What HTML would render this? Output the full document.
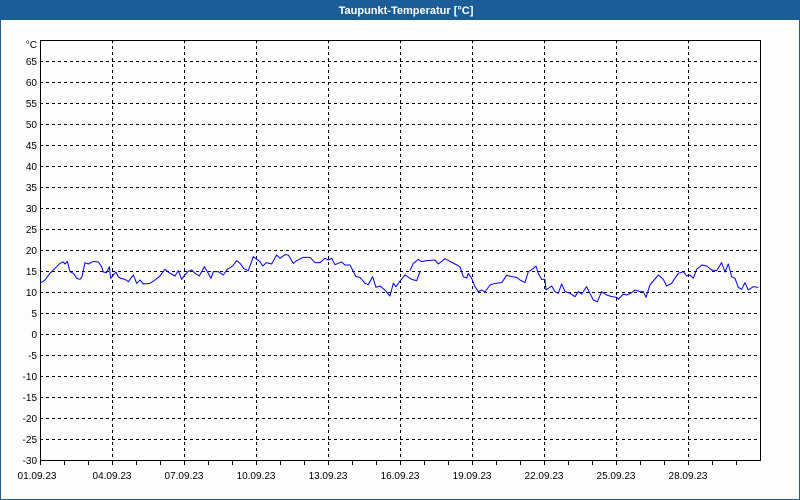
<!DOCTYPE html><html><head><meta charset="utf-8"><style>
html,body{margin:0;padding:0;width:800px;height:500px;overflow:hidden;background:#fcfdfc}
svg{display:block}
text{font-family:"Liberation Sans",sans-serif;font-size:10px;fill:#000}
</style></head><body>
<svg width="800" height="500" viewBox="0 0 800 500">
<rect x="0.5" y="0.5" width="799" height="499" fill="#fcfdfc" stroke="#1b5e97"/>
<rect x="0" y="0" width="800" height="20" fill="#1b5e97"/>
<text x="406" y="14" text-anchor="middle" style="font-weight:bold;font-size:11px;fill:#fff">Taupunkt-Temperatur [°C]</text>
<g stroke="#000" stroke-dasharray="3,3" stroke-width="1">
<path d="M40 61.5H760M40 82.5H760M40 103.5H760M40 124.5H760M40 145.5H760M40 166.5H760M40 187.5H760M40 208.5H760M40 229.5H760M40 250.5H760M40 271.5H760M40 292.5H760M40 313.5H760M40 334.5H760M40 355.5H760M40 376.5H760M40 397.5H760M40 418.5H760M40 439.5H760"/>
<path d="M112.5 40V460M184.5 40V460M256.5 40V460M328.5 40V460M400.5 40V460M472.5 40V460M544.5 40V460M616.5 40V460M688.5 40V460"/>
</g>
<rect x="40.5" y="40.5" width="720" height="420" fill="none" stroke="#000"/>
<g stroke="#000"><path d="M64.5 460v5M88.5 460v5M112.5 460v5M136.5 460v5M160.5 460v5M184.5 460v5M208.5 460v5M232.5 460v5M256.5 460v5M280.5 460v5M304.5 460v5M328.5 460v5M352.5 460v5M376.5 460v5M400.5 460v5M424.5 460v5M448.5 460v5M472.5 460v5M496.5 460v5M520.5 460v5M544.5 460v5M568.5 460v5M592.5 460v5M616.5 460v5M640.5 460v5M664.5 460v5M688.5 460v5M712.5 460v5M736.5 460v5M40.5 460v5"/></g>
<g text-anchor="end">
<text x="37" y="48">°C</text>
<text x="37" y="65">65</text><text x="37" y="86">60</text><text x="37" y="107">55</text><text x="37" y="128">50</text><text x="37" y="149">45</text><text x="37" y="170">40</text><text x="37" y="191">35</text><text x="37" y="212">30</text><text x="37" y="233">25</text><text x="37" y="254">20</text><text x="37" y="275">15</text><text x="37" y="296">10</text><text x="37" y="317">5</text><text x="37" y="338">0</text><text x="37" y="359">-5</text><text x="37" y="380">-10</text><text x="37" y="401">-15</text><text x="37" y="422">-20</text><text x="37" y="443">-25</text><text x="37" y="464">-30</text>
</g>
<g text-anchor="middle">
<text x="37" y="479">01.09.23</text><text x="112" y="479">04.09.23</text><text x="184" y="479">07.09.23</text><text x="256" y="479">10.09.23</text><text x="328" y="479">13.09.23</text><text x="400" y="479">16.09.23</text><text x="472" y="479">19.09.23</text><text x="544" y="479">22.09.23</text><text x="616" y="479">25.09.23</text><text x="688" y="479">28.09.23</text>
</g>
<g fill="none" stroke="#0000ee" stroke-width="1" stroke-linejoin="round">
<polyline vector-effect="non-scaling-stroke" transform="translate(30,240) scale(0.3333)" points="30,130 45,120 60,100 75,85 90,70 100,66 105,72 112,64 120,95 130,100 140,115 150,118 156,110 165,68 175,72 190,64 205,66 215,80 220,96 230,98 238,80 242,115 250,105 258,96 265,110 272,115 285,118 295,125 310,105 320,130 330,120 340,132 360,130 375,120 388,110 405,88 420,100 435,108 445,92 455,118 465,104 475,94 485,90 495,100 508,108 523,80 535,100 543,115 550,95 565,95 580,105 592,88 608,78 620,62 630,70 642,86 655,92 670,50 690,65 698,78 710,68 725,72 740,45 750,55 765,44 775,45 790,70 800,62 820,52 840,52 855,68 870,68 885,55 895,60 905,55 915,74 925,70 935,66 945,75 960,75 978,110 990,112 1005,130 1015,134 1028,110 1038,142 1050,138 1065,150 1080,168 1090,130 1098,140 1108,126 1125,105 1145,118 1160,122 1170,95"/>
<polyline vector-effect="non-scaling-stroke" transform="translate(410,240) scale(0.3333)" points="0,92 10,70 25,58 35,65 50,62 75,60 85,72 105,56 120,64 135,72 150,80 160,110 170,114 175,100 185,115 195,140 205,155 215,150 225,156 240,135 255,130 275,128 290,106 305,110 320,112 330,120 345,128 355,95 370,86 378,78 385,100 395,118 405,118 408,150 425,138 435,155 445,160 455,132 465,155 480,160 495,170 505,155 515,162 530,140 540,160 550,180 562,185 575,155 590,165 605,170 620,172 625,178 640,162 650,165 665,158 675,150 690,155 700,155 708,172 720,135 745,105 760,118 770,138 785,130 805,100 820,95 830,108 840,105 850,115 860,88 875,75 890,78 905,90 920,92 935,68 945,96 955,72 965,110 975,115 985,142 995,148 1005,128 1015,150 1030,140 1045,142"/>
</g>
</svg>
</body></html>
